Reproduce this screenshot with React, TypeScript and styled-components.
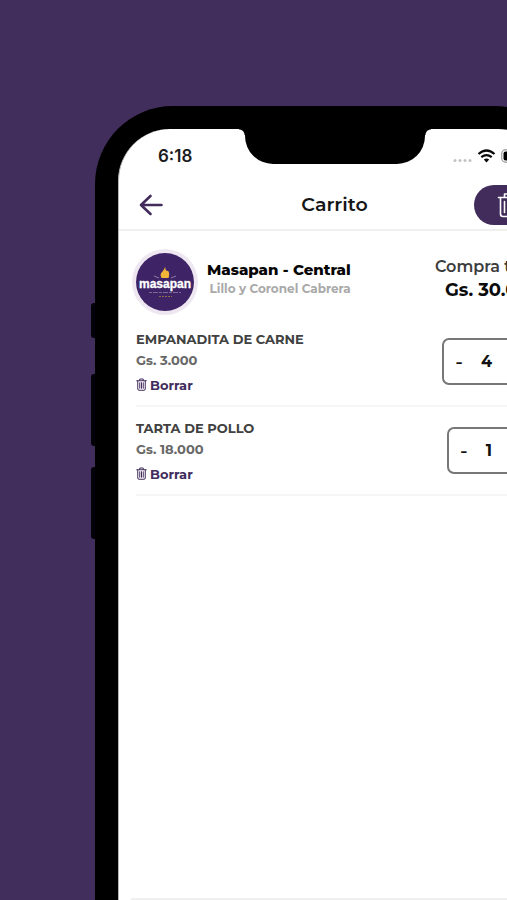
import React from "react";
import styled, { createGlobalStyle } from "styled-components";

const purple = "#412c5c";

const GlobalStyle = createGlobalStyle`
  *, *::before, *::after { box-sizing: border-box; }
  body { margin: 0; background: ${purple}; font-family: Montserrat, Inter, sans-serif; }
  h1, h2, h3, p, ul { margin: 0; padding: 0; }
  button { margin: 0; padding: 0; border: 0; background: none; font: inherit; color: inherit; cursor: pointer; }
`;

const Page = styled.div`
  display: flex;
  height: 100vh;
  padding: 106px 0 0 91px;
  background: #422e5c;
  overflow: hidden;
`;

const SideRail = styled.div`
  display: flex;
  flex-direction: column;
  flex: none;
  width: 4px;
  padding-top: 197px;
`;

const SideKey = styled.span<{ $height: number; $gap: number }>`
  height: ${(p) => p.$height}px;
  margin-bottom: ${(p) => p.$gap}px;
  border-radius: 3px 0 0 3px;
  background: #05030a;
`;

const Phone = styled.div`
  display: flex;
  flex: 1 0 auto;
  width: calc(100% - 4px + 66px);
  padding: 23px 23px 0;
  border-radius: 78px 78px 0 0;
  background: #000;
`;

const Screen = styled.main`
  display: flex;
  flex-direction: column;
  flex: 1;
  min-width: 0;
  border-left: 1px solid #b5b5b5;
  border-radius: 52px 52px 0 0;
  background: #fff;
  overflow: hidden;
`;

const StatusBar = styled.div`
  display: grid;
  grid-template-columns: 1fr 180px 1fr;
  height: 51px;
`;

const Time = styled.time`
  padding: 16px 0 0 39px;
  font: 600 17px/22px Inter, sans-serif;
  color: #1c1c1e;
`;

const Notch = styled.div`
  position: relative;
  height: 35px;
  border-radius: 0 0 28px 28px;
  background: #000;
  &::before, &::after {
    content: "";
    position: absolute;
    top: 0;
    width: 6px;
    height: 6px;
  }
  &::before {
    right: 100%;
    background: radial-gradient(circle at 0 100%, transparent 5px, #000 6px);
  }
  &::after {
    left: 100%;
    background: radial-gradient(circle at 100% 100%, transparent 5px, #000 6px);
  }
`;

const Signals = styled.div`
  display: flex;
  align-items: flex-start;
  gap: 5px;
  padding: 20px 0 0 28px;
`;

const TopBar = styled.header`
  display: grid;
  grid-template-columns: 1fr auto 1fr;
  align-items: center;
  height: 51px;
  padding: 0 8px;
  border-bottom: 2px solid #f0f0f0;
`;

const BackButton = styled.button`
  justify-self: start;
  display: flex;
  padding-left: 12px;
`;

const Title = styled.h1`
  font-size: 19px;
  line-height: 24px;
  font-weight: 600;
  color: #161616;
`;

const ClearButton = styled.button`
  justify-self: end;
  display: flex;
  align-items: center;
  justify-content: center;
  width: 68px;
  height: 40px;
  border-radius: 20px;
  background: ${purple};
  color: #fff;
`;

const Store = styled.section`
  display: flex;
  align-items: center;
  padding: 18px 8px 0 13px;
`;

const StoreText = styled.div`
  margin: -7px 0 0 9px;
  text-align: right;
`;

const StoreName = styled.h2`
  font-size: 15px;
  line-height: 20px;
  font-weight: 800;
  color: #050505;
  white-space: nowrap;
`;

const StoreAddress = styled.p`
  font-size: 12px;
  line-height: 18px;
  font-weight: 700;
  color: #a9a9a9;
  white-space: nowrap;
`;

const Total = styled.div`
  margin: -7px 0 0 auto;
  text-align: right;
  white-space: nowrap;
`;

const TotalLabel = styled.p`
  font-size: 16px;
  line-height: 22px;
  font-weight: 600;
  color: #3c3c3c;
`;

const TotalValue = styled.p`
  font-size: 18px;
  line-height: 24px;
  font-weight: 700;
  color: #0b0b0b;
`;

const Items = styled.ul`
  flex: 1;
  list-style: none;
  padding: 3px 16px 0 17px;
`;

const Item = styled.li`
  display: flex;
  align-items: center;
  justify-content: space-between;
  height: 89px;
  padding-right: 3px;
  border-bottom: 2px solid #f6f6f6;
`;

const ItemName = styled.h3`
  font-size: 13px;
  line-height: 20px;
  font-weight: 700;
  color: #414141;
`;

const ItemPrice = styled.p`
  font-size: 13px;
  line-height: 22px;
  font-weight: 700;
  color: #686868;
`;

const RemoveButton = styled.button`
  display: flex;
  align-items: center;
  gap: 3px;
  margin-top: 4px;
  font-size: 13px;
  line-height: 20px;
  font-weight: 700;
  color: ${purple};
`;

const Stepper = styled.div`
  display: flex;
  align-items: center;
  gap: 17px;
  height: 47px;
  padding: 0 10px;
  border: 2px solid #777;
  border-radius: 7px;
  font-size: 16px;
  font-weight: 700;
  color: #111;
`;

const StepButton = styled.button`
  display: flex;
  justify-content: center;
  width: 10px;
  font-size: 20px;
  font-weight: 500;
`;

const Footer = styled.footer`
  height: 2px;
  margin: 0 12px;
  background: #f0f0f0;
`;

const TrashIcon = ({ size, stroke }: { size: number; stroke: number }) => (
  <svg width={size} height={size + 2} viewBox="0 0 22 26" fill="none" stroke="currentColor" strokeWidth={stroke} strokeLinejoin="round" strokeLinecap="round" aria-hidden="true">
    <path d="M1.5 5.5h19M7.5 5V2h7v3M3.5 5.5v16.5q0 2.5 2.5 2.5h10q2.5 0 2.5-2.5V5.5" />
    <path d="M7.5 9.5v11M11 9.5v11M14.5 9.5v11" />
  </svg>
);

const StoreLogo = () => (
  <svg width="66" height="66" viewBox="0 0 66 66" role="img" aria-label="Masapan">
    <circle cx="33" cy="33" r="33" fill="#eee7f1" />
    <circle cx="33" cy="33" r="29" fill="#3e2466" />
    <path d="M33 18c1 2 0 3 2 4 2-1 3 4 1.500 7h-7c-1.500-3-1-5 .7-6 .5-1 2.300-3 2.800-5Z" fill="#f1b537" />
    <path d="m22 27 5 2m17-2-5 2" stroke="#8c7aa4" strokeWidth="1" />
    <text x="33" y="39" textAnchor="middle" fontFamily="Liberation Sans, sans-serif" fontWeight="700" fontSize="12" fill="#fff" stroke="#fff" strokeWidth=".3">masapan</text>
    <path d="M17 43.500h32" stroke="#9688ab" strokeOpacity=".7" strokeWidth="1" strokeDasharray="3 1 5 1" />
    <path d="M27 47.500h13" stroke="#8b7047" strokeWidth="1" strokeDasharray="2 1" />
  </svg>
);

const products = [
  { name: "EMPANADITA DE CARNE", price: "Gs. 3.000", quantity: 4 },
  { name: "TARTA DE POLLO", price: "Gs. 18.000", quantity: 1 },
];

export default function App() {
  return (
    <Page>
      <GlobalStyle />
      <SideRail>
        <SideKey $height={35} $gap={36} />
        <SideKey $height={72} $gap={21} />
        <SideKey $height={72} $gap={0} />
      </SideRail>
      <Phone>
        <Screen>
          <StatusBar>
            <Time>6:18</Time>
            <Notch />
            <Signals>
              <svg width="19" height="14" viewBox="0 0 19 14" fill="#c2c2c2" aria-hidden="true">
                <circle cx="2" cy="11.500" r="1.500" /><circle cx="7" cy="11.500" r="1.500" /><circle cx="12" cy="11.500" r="1.500" /><circle cx="17" cy="11.500" r="1.500" />
              </svg>
              <svg width="19" height="14" viewBox="0 0 18 14" fill="none" stroke="#0a0a0a" strokeWidth="2.200" aria-hidden="true">
                <path d="M1 5Q9-2 17 5M3.800 8.200Q9 4 14.200 8.200" />
                <path d="M6.300 10.600Q9 8.600 11.700 10.600L9 13.400Z" fill="#0a0a0a" stroke="none" />
              </svg>
              <svg width="28" height="14" viewBox="0 0 28 14" aria-hidden="true">
                <rect x=".7" y=".7" width="24" height="12.600" rx="4" fill="#fff" stroke="#a8a8a8" strokeWidth="1.400" />
                <rect x="2.500" y="2.500" width="19" height="9" rx="2" fill="#000" />
                <path d="M26 5q2 2 0 4Z" fill="#a8a8a8" />
              </svg>
            </Signals>
          </StatusBar>
          <TopBar>
            <BackButton aria-label="Volver">
              <svg width="24" height="22" viewBox="0 0 24 22" fill="none" stroke={purple} strokeWidth="2.600" strokeLinecap="round" strokeLinejoin="round" aria-hidden="true">
                <path d="M22.500 11H2M11.500 2 2 11l9.500 9" />
              </svg>
            </BackButton>
            <Title>Carrito</Title>
            <ClearButton aria-label="Vaciar carrito"><TrashIcon size={24} stroke={1.6} /></ClearButton>
          </TopBar>
          <Store>
            <StoreLogo />
            <StoreText>
              <StoreName>Masapan - Central</StoreName>
              <StoreAddress>Lillo y Coronel Cabrera</StoreAddress>
            </StoreText>
            <Total>
              <TotalLabel>Compra total</TotalLabel>
              <TotalValue>Gs. 30.000</TotalValue>
            </Total>
          </Store>
          <Items>
            {products.map((product) => (
              <Item key={product.name}>
                <div>
                  <ItemName>{product.name}</ItemName>
                  <ItemPrice>{product.price}</ItemPrice>
                  <RemoveButton><TrashIcon size={11} stroke={2} />Borrar</RemoveButton>
                </div>
                <Stepper>
                  <StepButton aria-label="Quitar uno">-</StepButton>
                  <span>{product.quantity}</span>
                  <StepButton aria-label="Agregar uno">+</StepButton>
                </Stepper>
              </Item>
            ))}
          </Items>
          <Footer />
        </Screen>
      </Phone>
    </Page>
  );
}
